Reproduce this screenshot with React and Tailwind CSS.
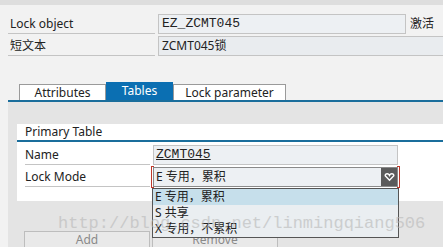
import { useState } from "react";

const sans = { fontFamily: '"Noto Sans", "Noto Sans CJK SC", sans-serif' };
const mono = { fontFamily: '"Liberation Mono", "Noto Sans CJK SC", monospace' };

function Bracket() {
  return (
    <>
      <div className="absolute left-[-3px] top-[-2px] h-[22px] w-[3px] border-l border-t border-b border-[#c0392b]" />
      <div className="absolute right-[-3px] top-[-2px] h-[22px] w-[3px] border-r border-t border-b border-[#c0392b]" />
    </>
  );
}

export default function App() {
  const [tab, setTab] = useState("Tables");
  const modes = ["E 专用，累积", "S 共享", "X 专用，不累积"];

  return (
    <div className="relative h-[247px] w-[443px] overflow-hidden bg-[#f2f2f2] text-[12px] text-[#222]" style={sans}>
      <div className="h-[5px] bg-[#dedede]" />

      {/* Header fields */}
      <div className="mt-[9px] pl-[8px]">
        <div className="flex h-[20px] items-stretch">
          <div className="flex w-[147px] items-center border-b border-[#c4c4c4] pl-[2px]">Lock object</div>
          <div className="ml-[3px] flex w-[248px] items-center border border-[#c4c4c4] bg-[#edf0f3] pl-[3px] text-[13px]" style={mono}>
            EZ_ZCMT045
          </div>
          <div className="ml-[4px] flex items-center">激活</div>
        </div>
        <div className="mt-[2px] flex h-[20px] items-stretch">
          <div className="flex w-[147px] items-center border-b border-[#c4c4c4] pl-[2px]">短文本</div>
          <div className="ml-[3px] flex flex-1 items-center border border-r-0 border-[#c4c4c4] bg-[#e9ecef] pl-[3px]">
            ZCMT045锁
          </div>
        </div>
      </div>

      {/* Tabs */}
      <div className="mt-[26px] ml-[8px]">
        <div className="flex items-end pl-[11px]">
          {["Attributes", "Tables", "Lock parameter"].map((t) => (
            <button
              key={t}
              onClick={() => setTab(t)}
              className={
                t === tab
                  ? "h-[18px] bg-[#0b6fb2] px-[13px] text-[12px] leading-[18px] text-white"
                  : "h-[16px] border border-b-0 border-[#9a9a9a] bg-white px-[11px] text-[12px] leading-[15px] text-[#222]"
              }
              style={{ ...sans, minWidth: t === "Attributes" ? 87 : t === "Tables" ? 67 : 113 }}
            >
              {t}
            </button>
          ))}
        </div>
        <div className="h-[2px] bg-[#1a6e9c]" />

        {/* Panel */}
        <div className="h-[150px] bg-[#e4e4e4] pt-[22px] pl-[9px]">
          <div className="bg-white">
            <div className="border-b-2 border-[#1a6e9c] pl-[8px] leading-[16px]">Primary Table</div>
            <div className="px-[8px] pt-[3px] pb-[14px]">
              <div className="flex h-[20px] items-stretch">
                <div className="flex w-[125px] items-center border-b border-[#c4c4c4]">Name</div>
                <div className="ml-[3px] flex w-[245px] items-center border border-[#c4c4c4] bg-[#edf0f3] pl-[2px] text-[13px] underline" style={mono}>
                  ZCMT045
                </div>
              </div>
              <div className="mt-[2px] flex h-[20px] items-stretch">
                <div className="flex w-[125px] items-center border-b border-[#c4c4c4]">Lock Mode</div>
                <div className="relative ml-[3px] flex w-[245px] items-center border border-[#8a8a8a] bg-[#edf0f3] pl-[2px]">
                  <span className="flex-1">E 专用，累积</span>
                  <span className="flex h-full w-[16px] items-center justify-center bg-[#5b5b5b]">
                    <svg width="11" height="9" viewBox="0 0 11 9" fill="none" stroke="white" strokeWidth="1.4">
                      <path d="M1.2 2.8 L5.5 7.2 L9.8 2.8 Q9.8 0.8 7.8 0.8 Q6.3 0.8 5.5 2.4 Q4.7 0.8 3.2 0.8 Q1.2 0.8 1.2 2.8Z" />
                    </svg>
                  </span>
                  <Bracket />
                </div>
              </div>
            </div>
          </div>

          {/* Buttons */}
          <div className="mt-[30px] flex pl-[7px] text-[#8a8a8a]">
            <div className="h-[20px] w-[126px] border border-[#bdbdbd] bg-[#e9e9e9] text-center leading-[16px]">Add</div>
            <div className="ml-[2px] h-[20px] w-[126px] border border-[#bdbdbd] bg-[#e9e9e9] text-center leading-[16px]">Remove</div>
          </div>
        </div>
      </div>

      {/* Dropdown list */}
      <div className="absolute left-[152px] top-[188px] w-[247px] border border-[#555] bg-[#eaeef1]">
        {modes.map((m, i) => (
          <div key={m} className={"h-[16px] pl-[2px] leading-[16px] " + (i === 0 ? "bg-[#c6dfeb]" : "")}>
            {m}
          </div>
        ))}
      </div>

      {/* Watermark */}
      <div
        className="pointer-events-none absolute left-[58px] top-[211px] text-[17px] text-[#b8b8b8] opacity-60"
        style={{ fontFamily: '"Liberation Mono", monospace' }}
      >
        http://blog.csdn.net/linmingqiang506
      </div>
    </div>
  );
}
